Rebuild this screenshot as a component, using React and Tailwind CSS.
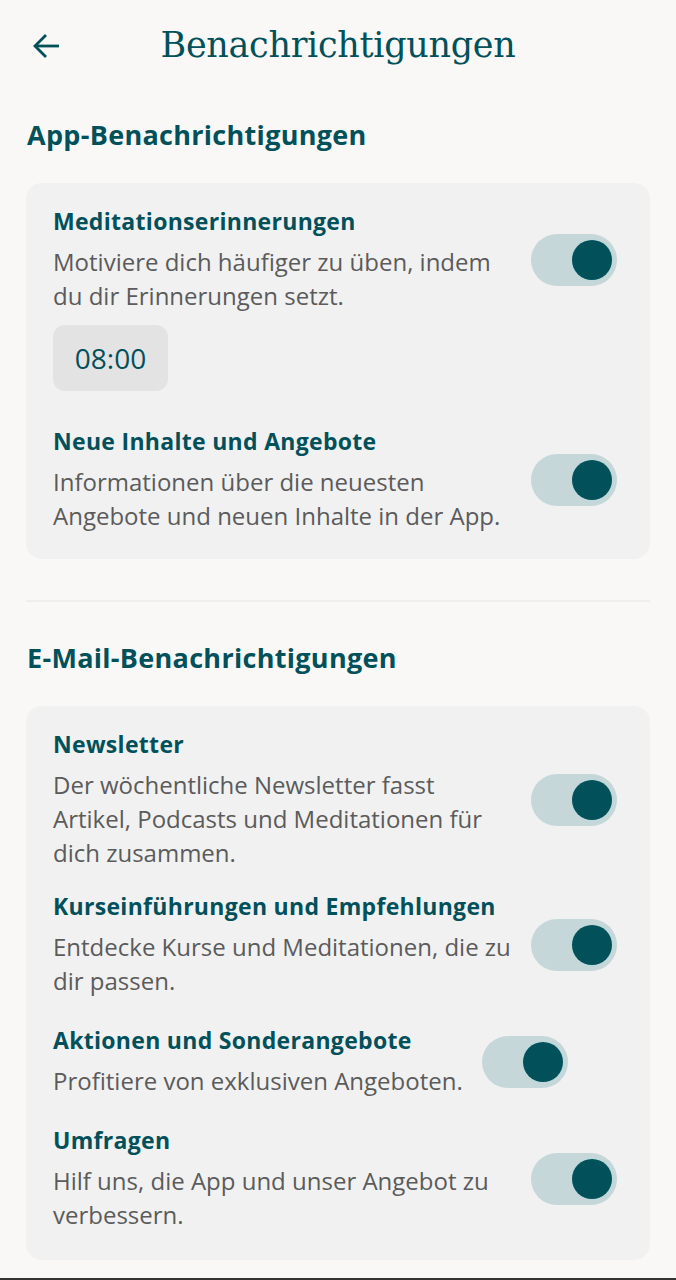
import React from "react";

const TEAL = "text-[#02505a]";

function Toggle() {
  return (
    <div className="shrink-0 w-[86px] h-[52px] rounded-full bg-[#c6d7d9] flex items-center justify-end pr-[5px]">
      <div className="w-[40px] h-[40px] rounded-full bg-[#02505a] ring-1 ring-[#b9dadd]" />
    </div>
  );
}

function Item({ title, children, extra, className = "" }) {
  return (
    <div className={`flex flex-col ${className}`}>
      <div className="flex items-center gap-[19px]">
        <div className="flex flex-col min-w-0">
          <div className={`text-[23px] leading-[28px] font-bold tracking-[0.3px] ${TEAL}`}>{title}</div>
          <div className="mt-[10px] text-[24px] leading-[34px] text-[#5b5b5b]">{children}</div>
        </div>
        <Toggle />
      </div>
      {extra}
    </div>
  );
}

export default function App() {
  return (
    <div className="min-h-[1280px] bg-[#f9f8f6] px-[26px] font-['Open_Sans',sans-serif] border-b-2 border-[#333]">
      <header className="relative h-[90px] flex items-center justify-center">
        <button className="absolute left-[6px] top-[33px] text-[#02505a]">
          <svg width="28" height="26" viewBox="0 0 28 26" fill="none" stroke="currentColor" strokeWidth="2.8" strokeLinecap="butt" strokeLinejoin="miter">
            <path d="M27 13H3" />
            <path d="M14 2 3 13l11 11" />
          </svg>
        </button>
        <h1 className={`font-['DejaVu_Serif',serif] text-[35px] ${TEAL} tracking-[-0.3px]`}>Benachrichtigungen</h1>
      </header>

      <h2 className={`mt-[29px] text-[27px] leading-[32px] font-bold tracking-[0.3px] ${TEAL} pl-[1px]`}>App-Benachrichtigungen</h2>

      <section className="mt-[32px] rounded-[16px] bg-[#f1f1f1] pl-[27px] pr-[33px] pt-[24px] pb-[26px] flex flex-col gap-[36px]">
        <Item
          title="Meditationserinnerungen"
          extra={
            <div className="mt-[12px] w-[115px] h-[66px] rounded-[12px] bg-[#e3e3e3] flex items-center justify-center text-[28px] text-[#02505a]">
              08:00
            </div>
          }
        >
          Motiviere dich häufiger zu üben, indem du dir Erinnerungen setzt.
        </Item>
        <Item title="Neue Inhalte und Angebote">
          Informationen über die neuesten Angebote und neuen Inhalte in der App.
        </Item>
      </section>

      <div className="mt-[41px] h-[2px] bg-[#efeeec]" />

      <h2 className={`mt-[40px] text-[27px] leading-[32px] font-bold tracking-[0.3px] ${TEAL} pl-[1px]`}>E-Mail-Benachrichtigungen</h2>

      <section className="mt-[32px] rounded-[16px] bg-[#f1f1f1] pl-[27px] pr-[33px] pt-[24px] pb-[28px] flex flex-col">
        <Item title="Newsletter">
          Der wöchentliche Newsletter fasst Artikel, Podcasts und Meditationen für dich zusammen.
        </Item>
        <Item className="mt-[22px]" title="Kurseinführungen und Empfehlungen">
          Entdecke Kurse und Meditationen, die zu dir passen.
        </Item>
        <Item className="mt-[28px]" title="Aktionen und Sonderangebote">Profitiere von exklusiven Angeboten.</Item>
        <Item className="mt-[28px]" title="Umfragen">Hilf uns, die App und unser Angebot zu verbessern.</Item>
      </section>
    </div>
  );
}
